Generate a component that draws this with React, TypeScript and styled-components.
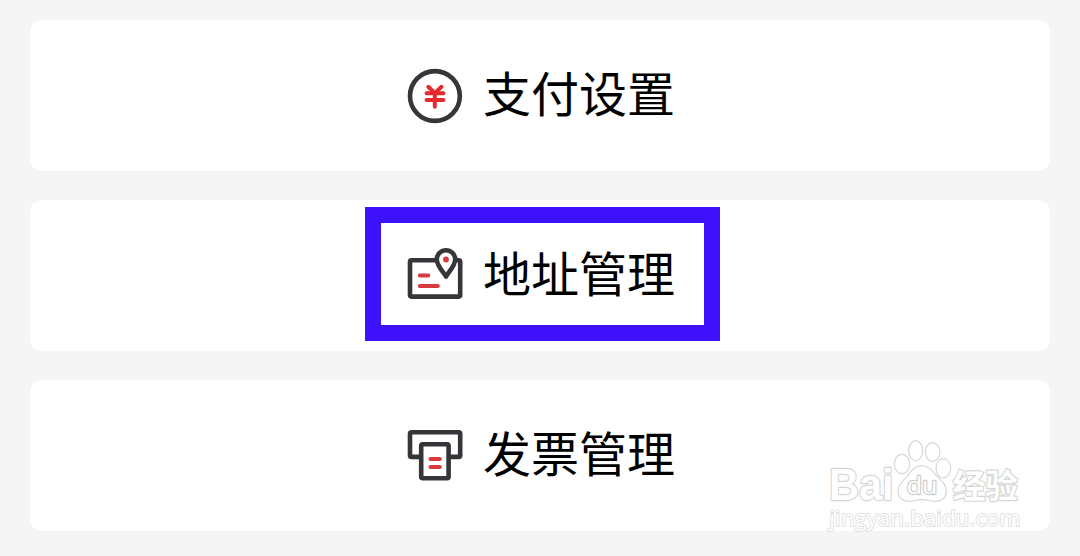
import React from "react";
import styled, { createGlobalStyle, css } from "styled-components";

const menus = [
  { title: "支付设置", icon: <PayIcon />, marked: false },
  { title: "地址管理", icon: <AddressIcon />, marked: true },
  { title: "发票管理", icon: <InvoiceIcon />, marked: false },
];

function App() {
  return (
    <>
      <GlobalStyle />
      <Page>
        <MenuList>
          {menus.map(({ title, icon, marked }) => (
            <MenuCard key={title}>
              <MenuLabel $marked={marked}>
                {icon}
                <MenuTitle>{title}</MenuTitle>
              </MenuLabel>
            </MenuCard>
          ))}
        </MenuList>

        <Watermark />
      </Page>
    </>
  );
}

function PayIcon() {
  return (
    <Icon viewBox="0 0 60 60">
      <circle cx="29.9" cy="31" r="24.9" />
      <path className="yen" d="M23.300 21.800l6.500 6.300 6.700-6.300M21.600 28.300h16.800M21.600 35h16.800M29.800 28v13.800" />
    </Icon>
  );
}

function AddressIcon() {
  return (
    <Icon viewBox="0 0 60 60">
      <rect x="5" y="15.200" width="50.200" height="36.400" rx="1.5" />
      <path className="pin" d="M41 31.500C38.300 27 31.800 20.500 31.800 14.400a9.200 9.200 0 0 1 18.400 0C50.200 20.500 43.700 27 41 31.500z" />
      <circle className="dot" cx="41" cy="14.500" r="2.900" />
      <path className="red" d="M14.800 30.500h8.500M14.800 41.100h18" />
    </Icon>
  );
}

function InvoiceIcon() {
  return (
    <Icon viewBox="0 0 60 60">
      <rect x="5" y="7.300" width="50.200" height="24.600" rx="1.500" />
      <rect className="paper" x="16.200" y="19.200" width="27.400" height="34" rx="1.500" />
      <path className="red" d="M25.500 34h9.300M25.500 41.900h9.300" />
    </Icon>
  );
}

function Watermark() {
  return (
    <WatermarkSvg viewBox="0 0 660 330">
      <text className="latin" x="42" y="211" fontSize="132" textLength="194" lengthAdjust="spacingAndGlyphs">
        Bai
      </text>
      <ellipse cx="261" cy="102" rx="23" ry="29" />
      <ellipse cx="302" cy="62" rx="21" ry="30" />
      <ellipse cx="353" cy="66" rx="22" ry="28" />
      <ellipse cx="385" cy="115" rx="22" ry="29" />
      <path d="M320 107C343 107 352 123 364 137C378 152 394 162 394 183C394 204 379 215 360 214C345 213 337 209 321 209C305 209 297 213 282 214C263 215 249 203 249 183C249 162 266 152 279 136C290 122 299 107 320 107z" />
      <text className="du" x="275" y="193" fontSize="73" textLength="92" lengthAdjust="spacingAndGlyphs">
        du
      </text>
      <text className="cjk" x="413" y="203" fontSize="98" textLength="196" lengthAdjust="spacingAndGlyphs">
        经验
      </text>
      <text className="url" x="43" y="288" fontSize="66" textLength="573" lengthAdjust="spacingAndGlyphs">
        jingyan.baidu.com
      </text>
    </WatermarkSvg>
  );
}

//@ styled ////////////////////////////////////////
const GlobalStyle = createGlobalStyle`
  * {
    box-sizing: border-box;
  }

  body {
    margin: 0;
    background-color: #f5f5f5;
    font-family: "Noto Sans CJK SC", sans-serif;
  }
`;

const Page = styled.main`
  position: relative;
  height: 556px;
  padding: 20px 30px;
  overflow: hidden;
`;

const MenuList = styled.ul`
  display: flex;
  flex-direction: column;
  gap: 29px;
  margin: 0;
  padding: 0;
  list-style: none;
`;

const MenuCard = styled.li`
  display: flex;
  align-items: center;
  justify-content: center;
  height: 151px;
  padding-bottom: 1px;
  border-radius: 12px;
  background-color: white;
`;

const markedStyle = css`
  padding: 22px 29px 20px 24px;
  margin: 0 -5px 2px 0;
  border: 16px solid #3d12fb;
`;

const MenuLabel = styled.div<{ $marked: boolean }>`
  display: flex;
  align-items: center;
  gap: 18px;
  color: black;
  font-size: 48px;
  white-space: nowrap;

  ${({ $marked }) => $marked && markedStyle}
`;

const MenuTitle = styled.span`
  padding-bottom: 8px;
  line-height: 52px;
`;

const Icon = styled.svg`
  width: 60px;
  height: 60px;
  fill: none;
  stroke: #35363a;
  stroke-width: 4.6;
  stroke-linejoin: round;

  & .pin,
  & .paper {
    fill: white;
  }

  & .red,
  & .yen {
    stroke: #d83a3e;
    stroke-width: 4;
    stroke-linecap: round;
  }

  & .yen {
    stroke: #e52b2f;
  }

  & .dot {
    fill: #d83a3e;
    stroke: none;
  }
`;

const WatermarkSvg = styled.svg`
  position: absolute;
  left: 815px;
  top: 430px;
  width: 220px;
  height: 110px;
  fill: white;
  stroke: #d6d6d6;
  stroke-width: 3.5;
  stroke-linejoin: round;

  & text {
    paint-order: stroke;
    stroke-width: 7;
  }

  & .latin {
    font-family: "Liberation Sans", sans-serif;
    font-weight: bold;
  }

  & .du {
    font-family: "Open Sans", sans-serif;
    font-weight: 500;
    stroke: #cccccc;
  }

  & .cjk {
    font-family: "Noto Sans CJK SC", sans-serif;
    font-weight: 700;
  }

  & .url {
    font-family: "Open Sans", sans-serif;
    stroke: #dcdcdc;
    stroke-width: 5;
  }
`;

export default App;
